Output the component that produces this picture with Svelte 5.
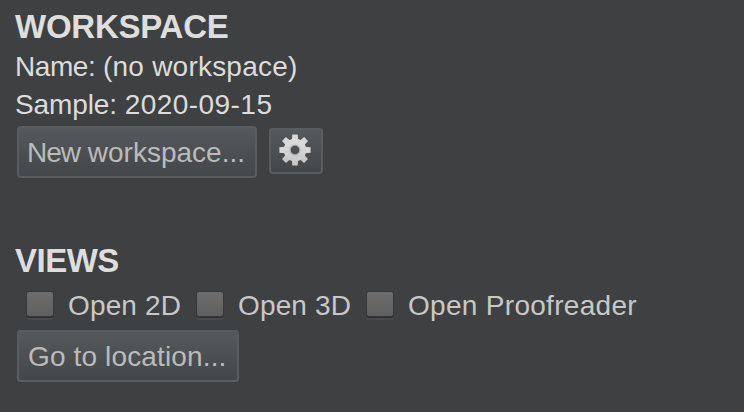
<script>
  const views = [
    { label: 'Open 2D', width: 170, spacing: 0.15 },
    { label: 'Open 3D', width: 170, spacing: 0.15 },
    { label: 'Open Proofreader', width: 300, spacing: 0.3 }
  ];
  const teeth = [0, 45, 90, 135, 180, 225, 270, 315];
</script>

<main>
  <section class="workspace">
    <h2 class="title-workspace">WORKSPACE</h2>
    <p><span class="name-key">Name:</span> <span class="name-value">(no workspace)</span></p>
    <p><span class="sample-key">Sample:</span> <span class="sample-value">2020-09-15</span></p>
    <div class="actions">
      <button class="btn new"><span class="text"><span class="tight">New</span> workspace...</span></button>
      <button class="btn settings" aria-label="Settings">
        <svg width="34" height="34" viewBox="-17 -17 34 34">
          <defs>
            <linearGradient id="metal" gradientUnits="userSpaceOnUse" x1="0" y1="-16" x2="0" y2="16">
              <stop offset="0" stop-color="#e2e2e2" />
              <stop offset="1" stop-color="#c6c6c6" />
            </linearGradient>
          </defs>
          {#each teeth as angle}
            <path d="M-3.3 -9 L-2.7 -15.6 L2.7 -15.6 L3.3 -9Z" transform="rotate({angle})" fill={angle > 90 && angle < 270 ? '#c8c8c8' : '#d8d8d8'} />
          {/each}
          <circle r="8" fill="none" stroke="url(#metal)" stroke-width="6.6" />
          <circle r="5" fill="none" stroke="#b0b1b2" stroke-width="1.2" />
        </svg>
      </button>
    </div>
  </section>
  <section class="views">
    <h2 class="title-views">VIEWS</h2>
    <div class="checks">
      {#each views as view}
        <div class="check" style="width: {view.width}px">
          <span class="box" role="checkbox" aria-checked="false" aria-label={view.label} tabindex="0"></span>
          <span class="label" style="letter-spacing: {view.spacing}px">{view.label}</span>
        </div>
      {/each}
    </div>
    <button class="btn go"><span class="text">Go to location...</span></button>
  </section>
</main>

<style>
  :global(body) {
    margin: 0;
    background: #3e4042;
  }
  main {
    box-sizing: border-box;
    width: 744px;
    height: 412px;
    padding: 8px 0 0 15px;
    overflow: hidden;
    background: #3e4042;
    color: #dcdcdc;
    font: 28px/38px 'Liberation Sans', Arial, sans-serif;
    white-space: nowrap;
  }
  h2 {
    margin: 0;
    height: 40px;
    font-size: 33px;
    line-height: 38px;
    font-weight: 700;
    color: #dedede;
  }
  .title-workspace {
    letter-spacing: -0.24px;
  }
  .title-views {
    letter-spacing: -0.5px;
  }
  p {
    margin: 0;
    height: 38px;
  }
  .name-key {
    letter-spacing: -0.45px;
  }
  .name-value {
    letter-spacing: 0.22px;
  }
  .sample-key {
    letter-spacing: -0.12px;
  }
  .sample-value {
    letter-spacing: 0.45px;
  }
  .workspace {
    height: 234px;
  }
  .actions {
    display: flex;
    gap: 12px;
    padding: 2px 0 0 2px;
  }
  .btn {
    box-sizing: border-box;
    display: flex;
    align-items: center;
    margin: 0;
    padding: 0 0 0 8px;
    height: 52px;
    border: 2px solid #5a5d5f;
    border-radius: 4px;
    background: linear-gradient(#55595c, #434749);
    color: #bbbbbb;
    font: inherit;
    white-space: nowrap;
  }
  .text {
    padding-top: 2px;
  }
  .tight {
    letter-spacing: -1px;
  }
  .new {
    width: 240px;
  }
  .settings {
    width: 54px;
    height: 46px;
    margin-top: 2px;
    padding: 0;
    justify-content: center;
  }
  .settings svg {
    display: block;
    flex: none;
    margin: -3px 0 0 -2px;
  }
  .checks {
    display: flex;
    height: 48px;
    padding-left: 12px;
  }
  .check {
    display: flex;
    align-items: flex-start;
    color: #c8c8c8;
  }
  .box {
    flex: none;
    box-sizing: border-box;
    width: 26px;
    height: 24px;
    margin: 10px 15px 0 0;
    border-radius: 2px;
    background: linear-gradient(#6d6d6d, #5f5f5f);
    box-shadow: 0 0 0 1px #37383a, 0 1px 0 1px #303133, 0 3px 0 1px #484a4b;
  }
  .label {
    padding-top: 5px;
  }
  .go {
    width: 222px;
    margin-left: 2px;
    padding-left: 9px;
    letter-spacing: 0.14px;
  }
</style>
